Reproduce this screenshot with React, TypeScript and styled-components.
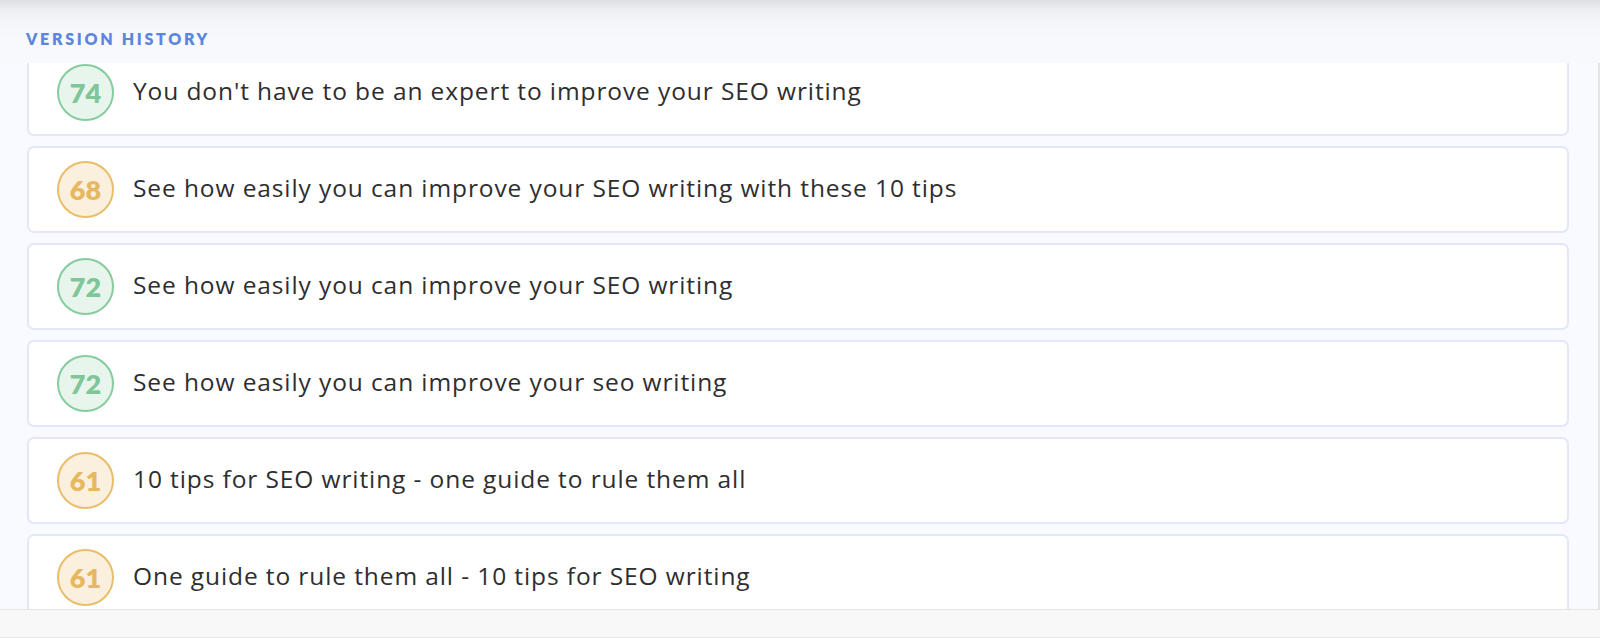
import React, { useLayoutEffect, useRef } from "react";
import styled, { createGlobalStyle } from "styled-components";

type Version = {
  score: number;
  title: string;
};

const versions: Version[] = [
  { score: 74, title: "You don't have to be an expert to improve your SEO writing" },
  { score: 68, title: "See how easily you can improve your SEO writing with these 10 tips" },
  { score: 72, title: "See how easily you can improve your SEO writing" },
  { score: 72, title: "See how easily you can improve your seo writing" },
  { score: 61, title: "10 tips for SEO writing - one guide to rule them all" },
  { score: 61, title: "One guide to rule them all - 10 tips for SEO writing" },
];

const GlobalStyle = createGlobalStyle`
  html, body {
    margin: 0;
    padding: 0;
    background: #ffffff;
  }
  body {
    font-family: "Open Sans", "Noto Sans", sans-serif;
    -webkit-font-smoothing: antialiased;
  }
`;

const App = () => {
  const listRef = useRef<HTMLDivElement>(null);

  useLayoutEffect(() => {
    if (listRef.current) listRef.current.scrollTop = 14;
  }, []);

  return (
    <S.Page>
      <GlobalStyle />
      <S.Header>
        <S.Heading>VERSION HISTORY</S.Heading>
      </S.Header>
      <S.List ref={listRef}>
        {versions.map((version, index) => (
          <S.Card key={index}>
            <S.Score $good={version.score >= 70}>{version.score}</S.Score>
            <S.Title>{version.title}</S.Title>
          </S.Card>
        ))}
      </S.List>
      <S.Footer />
    </S.Page>
  );
};

export default App;

const S = {
  Page: styled.div`
    display: flex;
    flex-direction: column;
    width: 100%;
    height: 638px;
  `,
  Header: styled.div`
    height: 63px;
    flex-shrink: 0;
    display: flex;
    align-items: flex-end;
    padding: 0 0 16px 26px;
    box-sizing: border-box;
    background: linear-gradient(
      to bottom,
      #dedfe3 0px,
      #eeeff3 10px,
      #f5f6fa 24px,
      #f8f9fd 40px
    );
  `,
  Heading: styled.h2`
    margin: 0;
    font-family: "Lato", "Noto Sans", sans-serif;
    font-size: 16px;
    font-weight: 800;
    letter-spacing: 2.7px;
    line-height: 16px;
    color: #5c86de;
  `,
  List: styled.div`
    height: 546px;
    flex-shrink: 0;
    overflow-y: auto;
    background: #f9faff;
    border-right: 2px solid #e5e5e7;
    padding: 0 29px 0 27px;
    display: flex;
    flex-direction: column;
    gap: 10px;
    scrollbar-width: none;
    &::-webkit-scrollbar {
      display: none;
    }
  `,
  Card: styled.div`
    flex-shrink: 0;
    height: 87px;
    box-sizing: border-box;
    display: flex;
    align-items: center;
    gap: 19px;
    padding-left: 28px;
    background: #ffffff;
    border: 2px solid #e2e7fc;
    border-radius: 7px;
  `,
  Score: styled.div<{ $good: boolean }>`
    width: 57px;
    height: 57px;
    flex-shrink: 0;
    box-sizing: border-box;
    border-radius: 50%;
    display: flex;
    align-items: center;
    justify-content: center;
    font-family: "Lato", "Noto Sans", sans-serif;
    font-size: 27px;
    font-weight: 800;
    border: 2px solid ${(p) => (p.$good ? "#86cc9e" : "#e9be6b")};
    background: ${(p) => (p.$good ? "#e8f5ec" : "#fbf0dd")};
    color: ${(p) => (p.$good ? "#7fc698" : "#e6b862")};
  `,
  Title: styled.span`
    font-size: 24.5px;
    letter-spacing: 0.9px;
    color: #2e2e30;
    padding-bottom: 4px;
  `,
  Footer: styled.div`
    height: 29px;
    flex-shrink: 0;
    box-sizing: border-box;
    background: #f8f8f8;
    border-top: 1px solid #e4e4e4;
    border-bottom: 1px solid #e4e4e4;
  `,
};
